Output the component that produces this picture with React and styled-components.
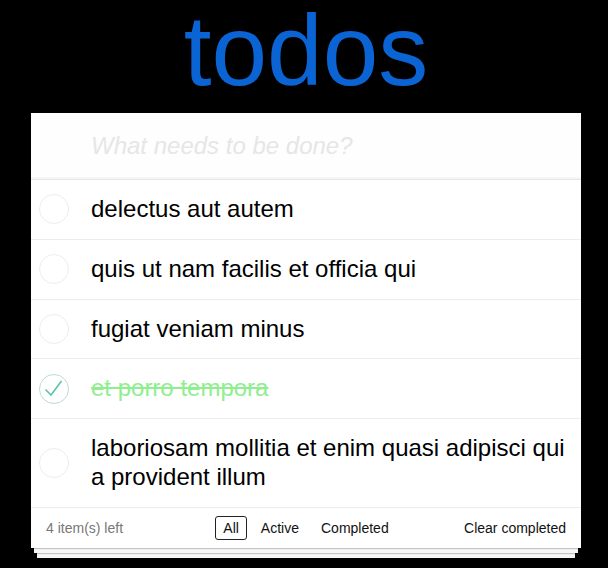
import React, { useState } from "react";
import styled, { createGlobalStyle } from "styled-components";

const GlobalStyle = createGlobalStyle`
  html {
    background: #000000;
  }
  html, body {
    margin: 0;
    padding: 0;
  }
  body {
    font-family: "Liberation Sans", Arial, sans-serif;
    -webkit-font-smoothing: antialiased;
  }
  * {
    box-sizing: border-box;
  }
`;

const Page = styled.div`
  display: flex;
  flex-direction: column;
  align-items: center;
  padding: 0 0 0 4px;
  min-height: 568px;
`;

const Title = styled.h1`
  margin: 0 0 13px;
  font-size: 100px;
  line-height: 100px;
  font-weight: 400;
  color: #0b64d4;
  text-align: center;
`;

const Card = styled.section`
  width: 550px;
  background: #ffffff;
  position: relative;
`;

const NewTodo = styled.input`
  display: block;
  width: 100%;
  height: 66px;
  margin: 0;
  padding: 16px 16px 16px 60px;
  border: none;
  outline: none;
  background: rgba(0, 0, 0, 0.003);
  box-shadow: inset 0 -2px 1px rgba(0, 0, 0, 0.03);
  font-family: inherit;
  font-size: 24px;
  line-height: 1.4em;
  color: #111111;

  &::placeholder {
    font-style: italic;
    color: #e6e6e6;
  }
`;

const List = styled.ul`
  margin: 0;
  padding: 0;
  list-style: none;
  border-top: 1px solid #e6e6e6;
`;

const Item = styled.li`
  display: flex;
  align-items: center;
  border-bottom: 1px solid #ededed;
  font-size: 24px;
`;

const Toggle = styled.button`
  flex: none;
  width: 46px;
  height: 40px;
  padding: 0;
  border: none;
  background: none;
  display: flex;
  align-items: center;
  justify-content: center;
  cursor: pointer;
`;

const Label = styled.label`
  flex: 1;
  padding: 15px 15px 15px 14px;
  line-height: 1.2;
  word-break: break-word;
  color: ${(p) => (p.done ? "#90ee90" : "#000000")};
  text-decoration: ${(p) => (p.done ? "line-through" : "none")};
`;

const Footer = styled.footer`
  position: relative;
  display: grid;
  grid-template-columns: 1fr auto 1fr;
  align-items: center;
  height: 40px;
  padding: 0 15px;
  font-size: 14px;
  color: #777777;

  &::before {
    content: "";
    position: absolute;
    right: 0;
    bottom: 0;
    left: 0;
    height: 50px;
    overflow: hidden;
    z-index: -1;
    box-shadow: 0 1px 1px rgba(0, 0, 0, 0.2), 0 8px 0 -3px #f6f6f6,
      0 9px 1px -3px rgba(0, 0, 0, 0.2), 0 16px 0 -6px #f6f6f6,
      0 17px 2px -6px rgba(0, 0, 0, 0.2);
  }
`;

const Count = styled.span`
  color: #777777;
`;

const Filters = styled.ul`
  display: flex;
  margin: 0;
  padding: 0;
  list-style: none;
`;

const FilterLink = styled.a`
  display: block;
  margin: 3px;
  padding: 3px 7px;
  border: 1px solid ${(p) => (p.selected ? "#222222" : "transparent")};
  border-radius: 3px;
  color: #111111;
  text-decoration: none;
  cursor: pointer;
`;

const ClearButton = styled.button`
  justify-self: end;
  padding: 0;
  border: none;
  background: none;
  font-family: inherit;
  font-size: 14px;
  color: #111111;
  cursor: pointer;
`;

const Circle = ({ done }) => (
  <svg width="32" height="32" viewBox="0 0 32 32">
    <circle
      cx="16"
      cy="16"
      r="14.5"
      fill="none"
      stroke={done ? "#bddad5" : "#ededed"}
      strokeWidth="1"
    />
    {done && (
      <path
        d="M7.5 16.5 L13 22 L23.5 8"
        fill="none"
        stroke="#5dc2af"
        strokeWidth="1.6"
      />
    )}
  </svg>
);

const initialTodos = [
  { id: 1, title: "delectus aut autem", done: false },
  { id: 2, title: "quis ut nam facilis et officia qui", done: false },
  { id: 3, title: "fugiat veniam minus", done: false },
  { id: 4, title: "et porro tempora", done: true },
  {
    id: 5,
    title: "laboriosam mollitia et enim quasi adipisci qui a provident illum",
    done: false,
  },
];

const App = () => {
  const [todos, setTodos] = useState(initialTodos);
  const [filter, setFilter] = useState("All");

  const toggle = (id) =>
    setTodos(todos.map((t) => (t.id === id ? { ...t, done: !t.done } : t)));

  const left = todos.filter((t) => !t.done).length;
  const shown = todos.filter((t) =>
    filter === "Active" ? !t.done : filter === "Completed" ? t.done : true,
  );

  return (
    <Page>
      <GlobalStyle />
      <Title>todos</Title>
      <Card>
        <NewTodo placeholder="What needs to be done?" />
        <List>
          {shown.map((todo) => (
            <Item key={todo.id}>
              <Toggle onClick={() => toggle(todo.id)}>
                <Circle done={todo.done} />
              </Toggle>
              <Label done={todo.done}>{todo.title}</Label>
            </Item>
          ))}
        </List>
        <Footer>
          <Count>{left} item(s) left</Count>
          <Filters>
            {["All", "Active", "Completed"].map((f) => (
              <li key={f}>
                <FilterLink selected={filter === f} onClick={() => setFilter(f)}>
                  {f}
                </FilterLink>
              </li>
            ))}
          </Filters>
          <ClearButton
            onClick={() => setTodos(todos.filter((t) => !t.done))}
          >
            Clear completed
          </ClearButton>
        </Footer>
      </Card>
    </Page>
  );
};

export default App;
